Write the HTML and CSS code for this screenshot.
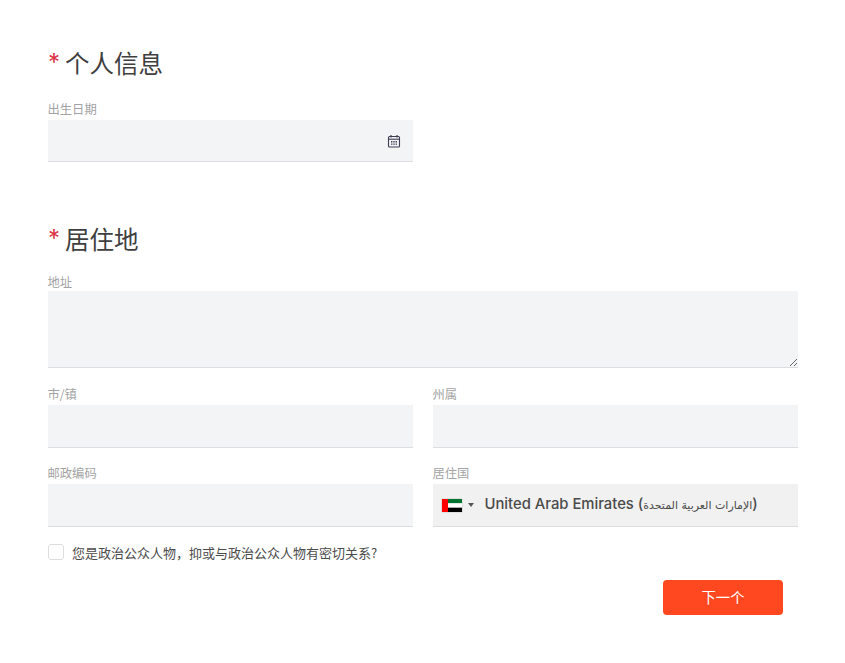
FILE: index.html
```html
<!DOCTYPE html>
<html lang="zh">
<head>
<meta charset="utf-8">
<title>个人信息</title>
<link rel="stylesheet" href="styles.css">
</head>
<body>
<form class="page">
  <section class="section section-personal">
    <h2 class="title title-personal"><span class="star">*</span><span>个人信息</span></h2>
    <div class="grid">
      <div class="field">
        <label class="label">出生日期</label>
        <div class="box box-date">
          <svg class="cal" viewBox="0 0 14 14" width="14" height="14" aria-hidden="true">
            <path d="M1.5 3.5a1 1 0 0 1 1-1h9a1 1 0 0 1 1 1v8.5a1 1 0 0 1-1 1h-9a1 1 0 0 1-1-1z" fill="none" stroke="#3f3d56" stroke-width="1.1"/>
            <path d="M1.5 5.2h11" stroke="#3f3d56" stroke-width="1.1"/>
            <path d="M4 1v2.4M10 1v2.4" stroke="#3f3d56" stroke-width="1.2"/>
            <path d="M4 7h1.4v1.4H4zM6.3 7h1.4v1.4H6.3zM8.6 7H10v1.4H8.6zM4 9.4h1.4v1.4H4zM6.3 9.4h1.4v1.4H6.3zM8.6 9.4H10v1.4H8.6z" fill="#3f3d56"/>
          </svg>
        </div>
      </div>
    </div>
  </section>

  <section class="section">
    <h2 class="title"><span class="star">*</span><span>居住地</span></h2>
    <div class="field field-address">
      <label class="label">地址</label>
      <textarea class="area"></textarea>
    </div>
    <div class="grid grid-rows">
      <div class="field">
        <label class="label">市/镇</label>
        <input class="box" type="text">
      </div>
      <div class="field">
        <label class="label">州属</label>
        <input class="box" type="text">
      </div>
      <div class="field">
        <label class="label">邮政编码</label>
        <input class="box" type="text">
      </div>
      <div class="field">
        <label class="label">居住国</label>
        <div class="box box-country">
          <svg class="flag" viewBox="0 0 20 13" width="20" height="13" aria-hidden="true">
            <rect width="20" height="4.33" y="0" fill="#00732f"/>
            <rect width="20" height="4.34" y="4.33" fill="#fff"/>
            <rect width="20" height="4.33" y="8.67" fill="#000"/>
            <rect width="6" height="13" fill="#f00"/>
          </svg>
          <span class="caret"></span>
          <span class="country">United Arab Emirates (<span class="native">الإمارات العربية المتحدة</span>)</span>
        </div>
      </div>
    </div>
    <label class="check">
      <span class="checkbox"></span>
      <span>您是政治公众人物，抑或与政治公众人物有密切关系?</span>
    </label>
    <div class="actions">
      <button class="next" type="button">下一个</button>
    </div>
  </section>
</form>
</body>
</html>
```

FILE: styles.css
```css
* { box-sizing: border-box; }
html, body { margin: 0; background: #fff; }
body {
  font-family: "Inter", "Noto Sans CJK SC", sans-serif;
  color: #3c3c3c;
}
.page {
  width: 845px;
  height: 663px;
  padding: 46px 47px 0 47.5px;
  overflow: hidden;
}
.section-personal { height: 176px; }
.title {
  display: flex;
  margin: 0 0 18px;
  height: 34px;
  font-family: "Noto Sans CJK SC", sans-serif;
  font-size: 24.5px;
  line-height: 34px;
  font-weight: 400;
  color: #3f3f3f;
  padding-left: 0.5px;
}
.title-personal { margin-bottom: 20px; }
.star {
  flex: none;
  width: 17px;
  color: #dc3545;
  font-family: "Inter", sans-serif;
  font-size: 24px;
}
.grid {
  display: grid;
  grid-template-columns: 365.5px 365.5px;
  column-gap: 19.5px;
}
.grid-rows { row-gap: 16px; margin-top: 17px; }
.field { display: flex; flex-direction: column; min-width: 0; }
.label {
  display: block;
  height: 20px;
  font-family: "Noto Sans CJK SC", sans-serif;
  font-size: 12.3px;
  line-height: 18px;
  color: #a3a3a3;
}
.box {
  display: block;
  width: 100%;
  height: 43px;
  margin: 0;
  padding: 0 12px;
  background: #f3f4f6;
  border: 0;
  border-bottom: 1px solid #dcdde0;
  border-radius: 0;
  outline: 0;
}
.box-date {
  display: flex;
  align-items: center;
  justify-content: flex-end;
  height: 42px;
  padding-right: 12px;
  padding-top: 1px;
}
.field-address .label { height: 17px; line-height: 17px; }
.area {
  display: block;
  width: 100%;
  height: 77px;
  margin: 0;
  padding: 8px 12px;
  background: #f3f4f6;
  border: 0;
  border-bottom: 1px solid #dcdde0;
  border-radius: 0;
  outline: 0;
  resize: vertical;
}
.box-country {
  display: flex;
  align-items: center;
  padding: 0 0 0 9px;
  background: #f1f1f1;
}
.flag { flex: none; box-shadow: 0 0 1px #888; }
.caret {
  flex: none;
  width: 0;
  height: 0;
  margin: 0 0 0 6px;
  border-left: 3px solid transparent;
  border-right: 3px solid transparent;
  border-top: 4px solid #555;
}
.country {
  margin-left: 11px;
  font-size: 14.8px;
  line-height: 20px;
  font-weight: 500;
  color: #4a4a4a;
  white-space: nowrap;
}
.native {
  font-family: "DejaVu Sans", sans-serif;
  font-size: 11px;
  font-weight: 400;
}
.check {
  display: flex;
  align-items: center;
  gap: 8px;
  margin-top: 16px;
  height: 18px;
  font-family: "Noto Sans CJK SC", sans-serif;
  font-size: 13px;
  color: #4b4b4b;
  padding-left: 0.5px;
}
.checkbox {
  flex: none;
  width: 16px;
  height: 16px;
  background: #fff;
  border: 1px solid #dddddd;
  border-radius: 3px;
}
.actions {
  display: flex;
  justify-content: flex-end;
  margin-top: 19px;
  padding-right: 15px;
}
.next {
  width: 120px;
  height: 35px;
  border: 0;
  border-radius: 4px;
  background: #ff4820;
  color: #fff;
  font-family: "Noto Sans CJK SC", sans-serif;
  font-size: 14.3px;
  padding: 0 0 2px;
}
```
